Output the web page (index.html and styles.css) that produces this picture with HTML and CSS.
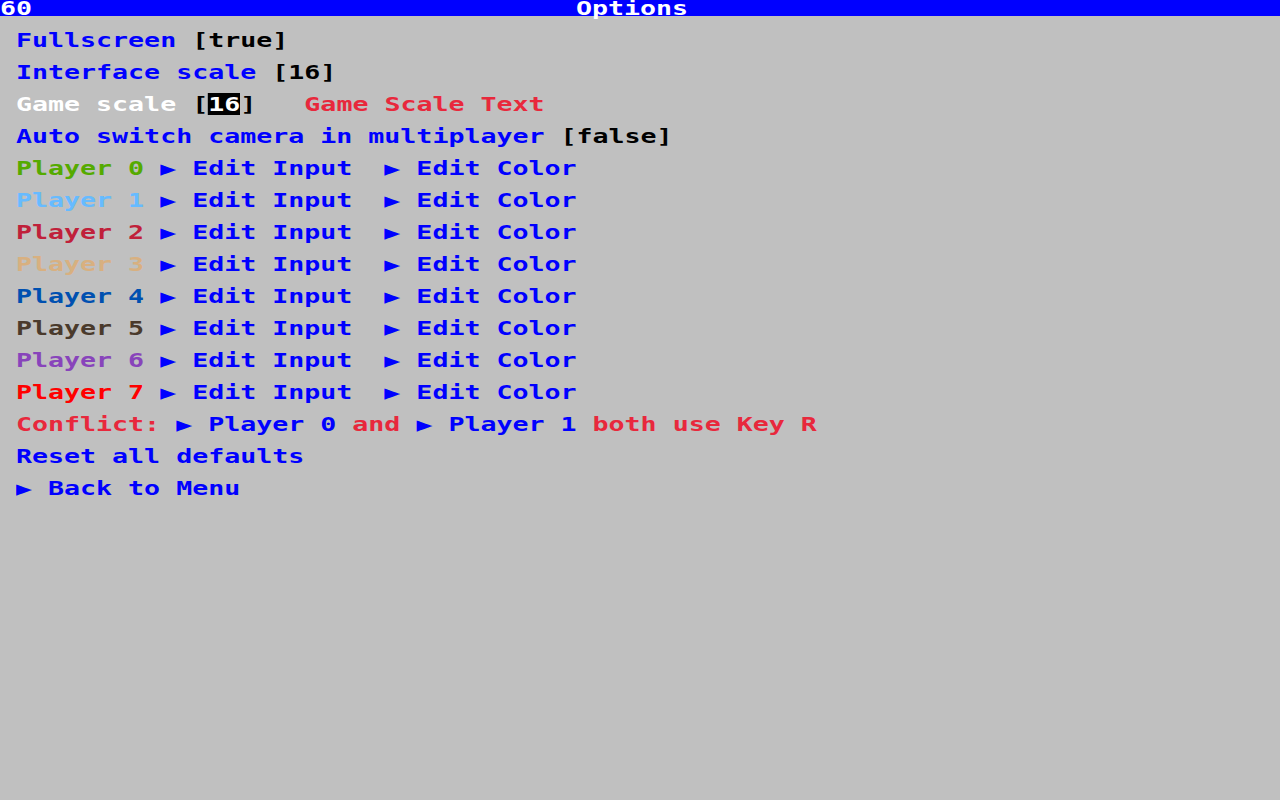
FILE: index.html
```html
<!DOCTYPE html>
<html>
<head>
<meta charset="utf-8">
<link rel="stylesheet" href="styles.css">
</head>
<body>
<div class="bar"><span class="fps">60</span><span class="title">Options</span></div>
<div class="menu">
  <div class="row">Fullscreen <span class="val">[true]</span></div>
  <div class="row">Interface scale <span class="val">[16]</span></div>
  <div class="row"><span class="sel">Game scale </span><span class="val">[<span class="hl">16</span>]</span>   <span class="red">Game Scale Text</span></div>
  <div class="row">Auto switch camera in multiplayer <span class="val">[false]</span></div>
  <div class="row"><span class="p0">Player 0</span> ▶ Edit Input  ▶ Edit Color</div>
  <div class="row"><span class="p1">Player 1</span> ▶ Edit Input  ▶ Edit Color</div>
  <div class="row"><span class="p2">Player 2</span> ▶ Edit Input  ▶ Edit Color</div>
  <div class="row"><span class="p3">Player 3</span> ▶ Edit Input  ▶ Edit Color</div>
  <div class="row"><span class="p4">Player 4</span> ▶ Edit Input  ▶ Edit Color</div>
  <div class="row"><span class="p5">Player 5</span> ▶ Edit Input  ▶ Edit Color</div>
  <div class="row"><span class="p6">Player 6</span> ▶ Edit Input  ▶ Edit Color</div>
  <div class="row"><span class="p7">Player 7</span> ▶ Edit Input  ▶ Edit Color</div>
  <div class="row"><span class="red">Conflict: </span>▶ Player 0 <span class="red">and </span>▶ Player 1 <span class="red">both use Key R</span></div>
  <div class="row">Reset all defaults</div>
  <div class="row">▶ Back to Menu</div>
</div>
</body>
</html>
```
FILE: styles.css
```css
html, body {
  margin: 0;
  padding: 0;
  background: #c0c0c0;
  width: 1280px;
  height: 800px;
  overflow: hidden;
}
body {
  font-family: "DejaVu Sans Mono", "Liberation Mono", monospace;
  font-weight: bold;
  font-size: 19px;
  line-height: 16px;
  color: #0000ff;
}
.bar {
  position: relative;
  height: 16px;
  background: #0000ff;
  color: #ffffff;
  text-align: center;
  padding-right: 16px;
  white-space: pre;
}
.fps {
  position: absolute;
  left: 0;
  top: 0;
  transform: scaleX(1.4);
  transform-origin: left center;
}
.title {
  display: inline-block;
  transform: scaleX(1.4);
  transform-origin: center center;
}
.menu {
  display: flex;
  flex-direction: column;
  align-items: flex-start;
  gap: 16px;
  padding: 16px 0 0 16px;
}
.row {
  height: 16px;
  white-space: pre;
  transform: scaleX(1.4);
  transform-origin: left center;
}
.val { color: #000000; }
.sel { color: #ffffff; }
.hl { background: #000000; color: #ffffff; }
.red { color: #e8283c; }
.p0 { color: #55aa00; }
.p1 { color: #66bbff; }
.p2 { color: #c0203a; }
.p3 { color: #d8b080; }
.p4 { color: #0050b0; }
.p5 { color: #4a3a2c; }
.p6 { color: #8844bb; }
.p7 { color: #ff0000; }
```
